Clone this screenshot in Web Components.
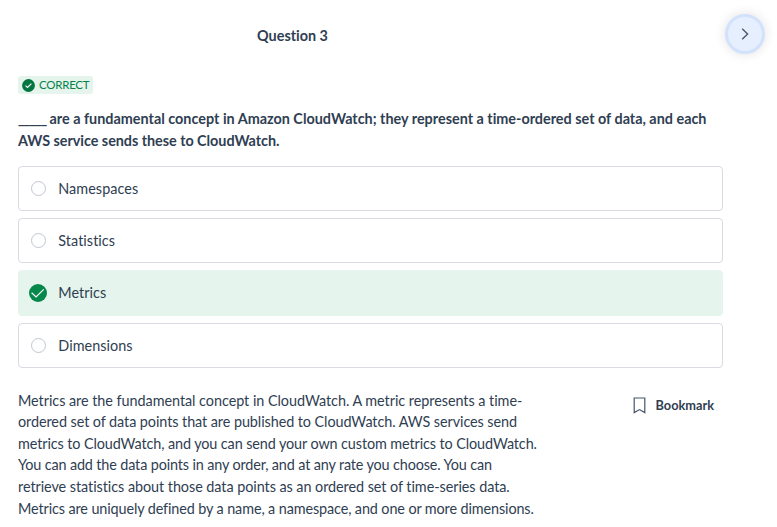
<!DOCTYPE html>
<html lang="en">
<head>
<meta charset="utf-8">
<title>Question 3</title>
<style>
html,body{margin:0;height:100%;overflow:hidden;background:#fff}
body{font-family:Lato,"Liberation Sans",sans-serif;font-size:14.4px;line-height:21.6px;color:#2f3e52;font-variant-ligatures:none}
</style>
</head>
<body>
<quiz-question></quiz-question>
<script>
const define = (name, html) => customElements.define(name, class extends HTMLElement {
  connectedCallback() {
    if (this.shadowRoot) return;
    this.attachShadow({ mode: 'open' }).innerHTML = html;
  }
});

define('quiz-header', `
<style>
:host{display:flex;align-items:center;height:40px;padding:14px 12px 0 18px}
.title{flex:0 0 549px;text-align:center;font-weight:700;line-height:20px;padding-top:4px}
button{margin-left:auto;box-sizing:border-box;width:40px;height:40px;padding:0;border:3px solid #d2e2fc;border-radius:50%;background:#e6effd;box-shadow:0 0 12px rgba(0,0,0,.12);display:flex;align-items:center;justify-content:center;color:#4a5868}
svg{display:block}
</style>
<div class="title"><slot></slot></div>
<button aria-label="Next"><svg width="8" height="12" viewBox="0 0 8 12" fill="none" stroke="currentColor" stroke-width="1.4"><path d="M1.2 .8 6.6 6 1.2 11.2"/></svg></button>`);

define('result-badge', `
<style>
:host{display:flex;align-items:center;gap:4px;width:75px;height:18px;box-sizing:border-box;padding-left:4px;border-radius:3px;background:#e5f5ed;color:#058148;font-size:11.5px;letter-spacing:-.25px;line-height:18px}
svg{display:block;flex:none}
</style>
<svg width="13" height="13" viewBox="0 0 13 13"><circle cx="6.5" cy="6.5" r="6.4" fill="#04763f"/><path d="M3.5 6.6 5.5 8.5 9.4 4.6" fill="none" stroke="#fff" stroke-width="1.2"/></svg>
<span><slot></slot></span>`);

define('answer-option', `
<style>
:host{display:flex;align-items:center;box-sizing:border-box;height:45px;padding-left:9px;border:1px solid #d9dae2;border-radius:4px;background:#fff;letter-spacing:.05px}
:host([correct]){background:#e5f5ed;border-color:#e5f5ed;height:46px}
svg{display:block;flex:none;margin-right:10.3px}
.on{display:none}
:host([correct]) .on{display:block}
:host([correct]) .off{display:none}
</style>
<svg class="off" width="20" height="20" viewBox="0 0 20 20"><circle cx="10.5" cy="9.5" r="7" fill="#fff" stroke="#c1c7d0"/></svg>
<svg class="on" width="20" height="20" viewBox="0 0 20 20"><circle cx="10" cy="10" r="9" fill="#06884b"/><path d="M3.6 9.7 8.1 14 15.7 6.3" fill="none" stroke="#fff" stroke-width="1.2"/></svg>
<span><slot></slot></span>`);

define('bookmark-button', `
<style>
:host{display:flex;align-items:center;gap:10px;font-size:12.75px;font-weight:700;line-height:20px}
svg{display:block}
span{margin-top:-1px}
</style>
<svg width="13" height="17" viewBox="0 0 13 17" fill="none" stroke="#465568" stroke-width="1.2"><path d="M1.2 1H11.8V15.6L6.5 12.6 1.2 15.6Z"/></svg>
<span><slot></slot></span>`);

define('text-line', `
<style>
:host{display:block;white-space:nowrap}
</style>
<slot></slot>`);

define('quiz-question', `
<style>
:host{display:block;width:777px}
main{padding:22px 54px 0 18px}
.prompt{margin-top:14px;font-weight:700}
.blank{display:inline-block;width:28px;letter-spacing:-1.1px}
.options{display:grid;gap:7px;margin-top:15px}
.foot{display:flex;justify-content:space-between;align-items:flex-start;margin-top:21.4px}
.explanation{width:530px}
bookmark-button{margin:6px 9px 0 0}
</style>
<quiz-header>Question 3</quiz-header>
<main>
<result-badge>CORRECT</result-badge>
<div class="prompt">
<text-line><span class="blank">_____</span> are a fundamental concept in Amazon CloudWatch; they represent a time-ordered set of data, and each</text-line>
<text-line style="letter-spacing:-.04px">AWS service sends these to CloudWatch.</text-line>
</div>
<div class="options">
<answer-option>Namespaces</answer-option>
<answer-option>Statistics</answer-option>
<answer-option correct>Metrics</answer-option>
<answer-option>Dimensions</answer-option>
</div>
<div class="foot">
<div class="explanation">
<text-line style="letter-spacing:-.04px">Metrics are the fundamental concept in CloudWatch. A metric represents a time-</text-line>
<text-line style="letter-spacing:-.07px">ordered set of data points that are published to CloudWatch. AWS services send</text-line>
<text-line style="letter-spacing:-.1px">metrics to CloudWatch, and you can send your own custom metrics to CloudWatch.</text-line>
<text-line style="letter-spacing:-.135px">You can add the data points in any order, and at any rate you choose. You can</text-line>
<text-line style="letter-spacing:-.055px">retrieve statistics about those data points as an ordered set of time-series data.</text-line>
<text-line style="letter-spacing:-.11px">Metrics are uniquely defined by a name, a namespace, and one or more dimensions.</text-line>
</div>
<bookmark-button>Bookmark</bookmark-button>
</div>
</main>`);
</script>
</body>
</html>
